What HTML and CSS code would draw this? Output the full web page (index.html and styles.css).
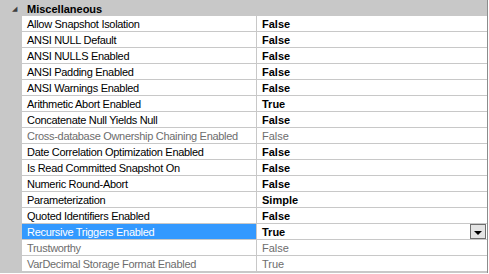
FILE: index.html
```html
<!DOCTYPE html>
<html>
<head lang="en">
    <meta charset="UTF-8">
    <title>Properties</title>
    <link rel="stylesheet" href="styles.css">
</head>
<body>
    <div class="grid">
        <div class="cat">
            <span class="cat-arrow">&#9698;</span>
            <span class="cat-name">Miscellaneous</span>
        </div>

        <div class="row"><span class="name">Allow Snapshot Isolation</span><span class="value">False</span></div>
        <div class="row"><span class="name">ANSI NULL Default</span><span class="value">False</span></div>
        <div class="row"><span class="name">ANSI NULLS Enabled</span><span class="value">False</span></div>
        <div class="row"><span class="name">ANSI Padding Enabled</span><span class="value">False</span></div>
        <div class="row"><span class="name">ANSI Warnings Enabled</span><span class="value">False</span></div>
        <div class="row"><span class="name">Arithmetic Abort Enabled</span><span class="value">True</span></div>
        <div class="row"><span class="name">Concatenate Null Yields Null</span><span class="value">False</span></div>
        <div class="row disabled"><span class="name">Cross-database Ownership Chaining Enabled</span><span class="value">False</span></div>
        <div class="row"><span class="name">Date Correlation Optimization Enabled</span><span class="value">False</span></div>
        <div class="row"><span class="name">Is Read Committed Snapshot On</span><span class="value">False</span></div>
        <div class="row"><span class="name">Numeric Round-Abort</span><span class="value">False</span></div>
        <div class="row"><span class="name">Parameterization</span><span class="value">Simple</span></div>
        <div class="row"><span class="name">Quoted Identifiers Enabled</span><span class="value">False</span></div>
        <div class="row selected"><span class="name">Recursive Triggers Enabled</span><span class="value">True<span class="drop"><span class="drop-arrow"></span></span></span></div>
        <div class="row disabled"><span class="name">Trustworthy</span><span class="value">False</span></div>
        <div class="row disabled"><span class="name">VarDecimal Storage Format Enabled</span><span class="value">True</span></div>
    </div>
</body>
</html>
```

FILE: styles.css
```css
body{
    margin: 0;
    padding: 0;
    background-color: #ffffff;
    font-family: "Liberation Sans", Arial, sans-serif;
    font-size: 11px;
    color: #000;
}
.grid{
    width: 488px;
    border-right: 1px #8c8c8c solid;
    background-color: #c8c8c8;
    padding-left: 22px;
    padding-bottom: 1px;
    box-sizing: border-box;
}
.cat{
    display: flex;
    align-items: center;
    height: 16px;
    margin-left: -22px;
    padding-top: 1px;
    box-sizing: border-box;
}
.cat-arrow{
    width: 27px;
    text-align: center;
    font-size: 7px;
    color: #404040;
    padding-left: 1px;
    box-sizing: border-box;
}
.cat-name{
    font-weight: bold;
}
.row{
    display: flex;
    height: 16px;
    background-color: #fff;
    border-bottom: 1px #c8c8c8 solid;
    box-sizing: border-box;
}
.name{
    width: 235px;
    padding: 2px 0 0 5px;
    box-sizing: border-box;
    border-right: 1px #c8c8c8 solid;
    line-height: 13px;
    letter-spacing: -0.3px;
    white-space: nowrap;
    overflow: hidden;
}
.value{
    flex: 1;
    padding: 2px 0 0 5px;
    font-weight: bold;
    line-height: 13px;
    position: relative;
}
.disabled .name,
.disabled .value{
    color: #6d6d6d;
    font-weight: normal;
}
.selected .name{
    background-color: #3399ff;
    color: #fff;
}
.drop{
    position: absolute;
    right: 1px;
    top: 0;
    width: 16px;
    height: 15px;
    box-sizing: border-box;
    border: 1px #6e6e6e solid;
    background-color: #e4e4e4;
    display: flex;
    align-items: center;
    justify-content: center;
}
.drop-arrow{
    width: 0;
    height: 0;
    border-left: 4px solid transparent;
    border-right: 4px solid transparent;
    border-top: 4px solid #000;
    margin-top: 2px;
}
```
